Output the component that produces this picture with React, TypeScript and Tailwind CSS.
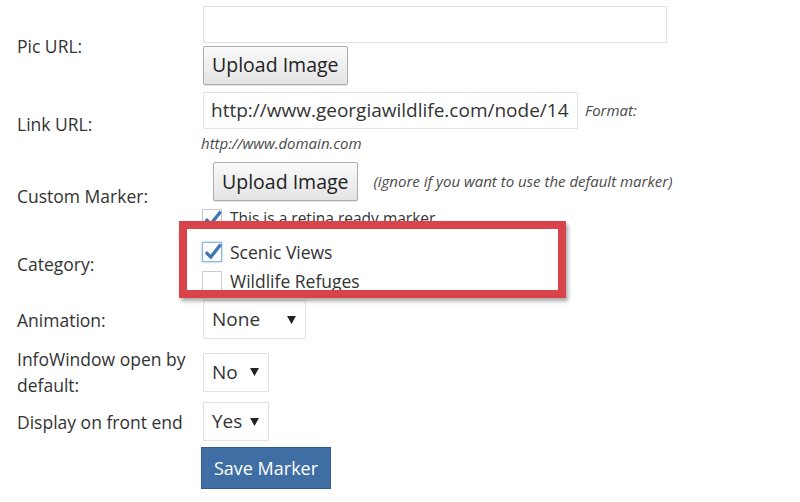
import { ReactNode } from 'react'

const font = { fontFamily: '"Open Sans", "Noto Sans", sans-serif' }

function Checkbox({ checked, focused }: { checked?: boolean; focused?: boolean }) {
  return (
    <span
      className={`relative inline-block w-[20px] h-[20px] shrink-0 bg-white border ${
        focused ? 'border-[#8fb3dc] shadow-[0_0_2px_rgba(30,140,190,0.6)]' : 'border-[#c8cbce]'
      }`}
    >
      {checked && (
        <svg viewBox="0 0 20 20" className="absolute -left-px -top-[3px] w-[22px] h-[22px]">
          <path d="M3.5 11 L8 15.5 L17 4" fill="none" stroke="#3d77b6" strokeWidth="3" strokeLinecap="butt" strokeLinejoin="miter" />
        </svg>
      )}
    </span>
  )
}

function Select({ value, width }: { value: string; width: string }) {
  return (
    <div className={`flex items-center justify-between h-[39px] ${width} bg-white border border-[#e2e2e2] pl-[8px] pr-[9px] text-[19px] text-[#333]`}>
      <span>{value}</span>
      <svg viewBox="0 0 10 9" className="w-[9px] h-[8px]">
        <path d="M0 0 H10 L5 9 Z" fill="#222" />
      </svg>
    </div>
  )
}

function GrayButton({ children }: { children: ReactNode }) {
  return (
    <button className="h-[39px] px-[8px] text-[19.5px] text-[#222] bg-gradient-to-b from-[#fafafa] to-[#e4e4e4] border border-[#adadad] rounded-[2px] shadow-[0_1px_1px_rgba(0,0,0,0.12)] leading-none">
      {children}
    </button>
  )
}

function Row({ label, children, className, labelClass }: { label: ReactNode; children: ReactNode; className?: string; labelClass?: string }) {
  return (
    <div className={`flex items-center ${className || ''}`}>
      <div className={`w-[186px] shrink-0 text-[17.5px] text-[#333] leading-[26px] ${labelClass || ''}`}>{label}</div>
      <div>{children}</div>
    </div>
  )
}

export default function App() {
  return (
    <div className="relative w-[800px] h-[502px] bg-white overflow-hidden" style={font}>
      <div className="pl-[17px] pt-[5px]">
        {/* Pic URL */}
        <Row label="Pic URL:" className="h-[80px]" labelClass="pt-[2px]">
          <div className="flex flex-col gap-[3px]">
            <div className="w-[464px] h-[37px] border border-[#e2e2e2] bg-white" />
            <div>
              <GrayButton>Upload Image</GrayButton>
            </div>
          </div>
        </Row>

        {/* Link URL */}
        <Row label="Link URL:" className="mt-[6px] h-[62px]" labelClass="pt-[4px]">
          <div>
            <div className="flex items-center">
              <div className="w-[375px] h-[37px] border border-[#e2e2e2] bg-white pl-[7px] flex items-center text-[19px] text-[#333] whitespace-nowrap overflow-hidden">
                http://www.georgiawildlife.com/node/14
              </div>
              <span className="ml-[7px] text-[15px] italic text-[#4a4a4a]">Format:</span>
            </div>
            <div className="mt-[5px] -ml-[2px] text-[15px] italic text-[#4a4a4a] leading-[18px]">http://www.domain.com</div>
          </div>
        </Row>

        {/* Custom Marker */}
        <Row label="Custom Marker:" className="mt-[10px] h-[66px]">
          <div>
            <div className="flex items-center">
              <div className="ml-[10px]">
                <GrayButton>Upload Image</GrayButton>
              </div>
              <span className="ml-[16px] text-[15px] italic text-[#4a4a4a]">(ignore if you want to use the default marker)</span>
            </div>
            <div className="mt-[6px] -ml-px flex items-center gap-[8px] text-[15.5px] text-[#333]">
              <Checkbox checked />
              <span>This is a retina ready marker</span>
            </div>
          </div>
        </Row>

        {/* Category */}
        <Row label="Category:" className="mt-[4px] h-[62px]">
          <div className="-ml-px flex flex-col gap-[9px] pt-[4px]">
            <div className="flex items-center gap-[8px] text-[17.5px] text-[#333] leading-[20px]">
              <Checkbox checked focused />
              <span>Scenic Views</span>
            </div>
            <div className="flex items-center gap-[8px] text-[17.5px] text-[#333] leading-[20px]">
              <Checkbox />
              <span>Wildlife Refuges</span>
            </div>
          </div>
        </Row>

        {/* Animation */}
        <Row label="Animation:" className="mt-[5px] h-[39px]">
          <Select value="None" width="w-[103px]" />
        </Row>

        <Row label={<>InfoWindow open by<br />default:</>} className="mt-[7px] h-[52px]">
          <Select value="No" width="w-[66px]" />
        </Row>

        <Row label="Display on front end" className="mt-[4px] h-[39px]">
          <Select value="Yes" width="w-[66px]" />
        </Row>

        <Row label="" className="mt-[6px]">
          <button className="-ml-[2px] w-[130px] h-[42px] bg-[#3e6ea3] border border-[#2f5d8f] text-white text-[18px]">
            Save Marker
          </button>
        </Row>
      </div>

      {/* red highlight box over the category choices */}
      <div className="absolute left-[179px] top-[221px] w-[387px] h-[77px] border-[8px] border-[#d9434a] shadow-[2px_3px_4px_rgba(0,0,0,0.35)] pointer-events-none" />
    </div>
  )
}
